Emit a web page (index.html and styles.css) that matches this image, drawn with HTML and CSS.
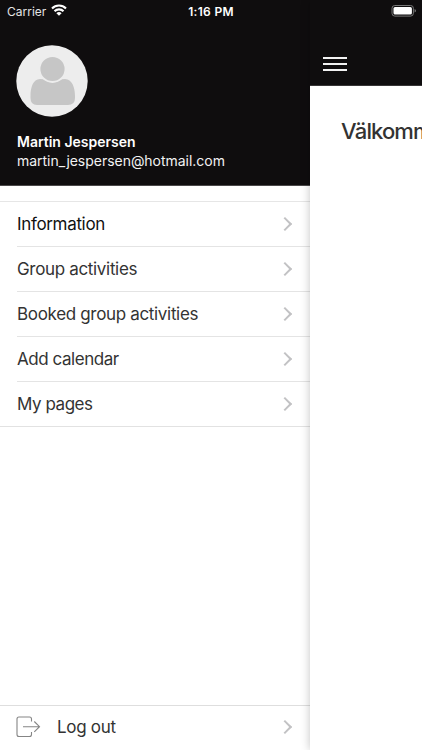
FILE: index.html
```html
<!DOCTYPE html>
<html lang="en">
<head>
  <meta charset="utf-8">
  <title>Menu</title>
  <meta name="viewport" content="width=device-width, initial-scale=1">
  <link rel="stylesheet" href="styles.css">
</head>
<body>
  <div class="statusbar">
    <div class="carrier">
      <span>Carrier</span>
      <svg width="16" height="12" viewBox="0 0 16 12" fill="none" stroke="#fff" stroke-width="2.1">
        <path d="M1 4.4a10 10 0 0 1 14 0"/>
        <path d="M3.5 7.2a6.4 6.4 0 0 1 9 0"/>
        <path d="M8 11.8L5.4 9.2a3.7 3.7 0 0 1 5.2 0z" fill="#fff" stroke="none"/>
      </svg>
    </div>
    <span class="clock">1:16 PM</span>
    <svg class="battery" width="26" height="12" viewBox="0 0 26 12">
      <rect x="1" y=".5" width="21.4" height="10.6" rx="2.8" fill="none" stroke="#777"/>
      <rect x="2.5" y="2" width="18.4" height="7.6" rx="1.5" fill="#fff"/>
      <path d="M23.6 4v3.6q1.3-.6 1.3-1.8t-1.3-1.8z" fill="#888"/>
    </svg>
  </div>

  <aside class="drawer">
    <header class="profile">
      <svg class="avatar" width="72" height="72" viewBox="0 0 72 72">
        <circle cx="36" cy="36" r="35.7" fill="#ededed"/>
        <path d="M24 34q3 0 5.5 1.4 7 3.8 14 0 2.5-1.4 5.5-1.4c7 0 10 8.5 10 17v2q0 7-7 7H21q-6.5 0-6.500-7v-2c0-8.500 2.500-17 9.500-17z" fill="#c6c6c6"/>
        <circle cx="36.5" cy="24" r="13" fill="#c6c6c6" stroke="#ededed" stroke-width="1.8"/>
      </svg>
      <div class="name">Martin Jespersen</div>
      <div class="email">martin_jespersen@hotmail.com</div>
    </header>

    <ul class="menu">
      <li class="active"><span>Information</span><i class="chevron"></i></li>
      <li><span>Group activities</span><i class="chevron"></i></li>
      <li><span>Booked group activities</span><i class="chevron"></i></li>
      <li><span>Add calendar</span><i class="chevron"></i></li>
      <li><span>My pages</span><i class="chevron"></i></li>
    </ul>

    <div class="logout">
      <svg width="25" height="22" viewBox="0 0 25 22" fill="none" stroke="#858585" stroke-width="1.1">
        <path d="M15.5 5.5V3q0-2-2-2H3Q1 1 1 3v15.5q0 2 2 2h10.5q2 0 2-2V16"/>
        <path d="M7 10.7h16.5M18.3 5.5l5.2 5.200-5.200 5.200"/>
      </svg>
      <span class="logout-text">Log out</span><i class="chevron"></i>
    </div>
  </aside>

  <main class="page">
    <div class="topbar">
      <div class="burger"><b></b><b></b><b></b></div>
    </div>
    <h1>Välkommen</h1>
  </main>
</body>
</html>
```

FILE: styles.css
```css
* { box-sizing: border-box; }
body {
  margin: 0;
  height: 750px;
  display: flex;
  overflow: hidden;
  background: #fff;
  color: #333;
  font-family: Inter, "Liberation Sans", sans-serif;
}

/* status bar lies over the drawer and the page */
.statusbar {
  position: absolute;
  top: 0;
  left: 0;
  z-index: 2;
  width: 422px;
  height: 22px;
  padding: 0 7px;
  display: grid;
  grid-template-columns: 1fr auto 1fr;
  align-items: center;
  color: #fff;
  font-size: 12px;
}
.carrier { display: flex; align-items: center; gap: 5px; color: #e4e4e4; }
.carrier svg { margin-top: -2px; }
.clock { font-weight: 600; letter-spacing: 0.3px; }
.battery { justify-self: end; margin: -1px -2px 0 0; }

.drawer {
  width: 310px;
  flex: none;
  display: flex;
  flex-direction: column;
}
.profile {
  height: 186px;
  padding: 45px 0 0 16px;
  background: #0f0d0e;
  border-bottom: 1px solid #4a4849;
  color: #fff;
}
.avatar { display: block; }
.name { margin: 16px 0 0 1px; font-size: 14px; line-height: 18px; font-weight: 600; }
.email { margin-left: 1px; font-size: 14px; line-height: 19px; letter-spacing: -0.03px; color: #f2f2f2; }

.menu {
  list-style: none;
  margin: 15px 0 0;
  padding: 0 0 0 17px;
  border-top: 1px solid #e6e6e6;
  border-bottom: 1px solid #e2e2e2;
}
.menu li {
  height: 45px;
  padding-right: 18px;
  display: flex;
  align-items: center;
  justify-content: space-between;
  border-bottom: 1px solid #e4e4e4;
  font-size: 17px;
  letter-spacing: -0.33px;
}
.menu li:last-child { border-bottom: none; height: 44px; }
.menu li:nth-child(n+4) { letter-spacing: -0.45px; }
.menu .active { color: #111; }

.chevron {
  width: 10px;
  height: 10px;
  margin-right: 2px;
  border: solid #c2c2c4;
  border-width: 2px 2px 0 0;
  transform: rotate(45deg);
}

.logout {
  margin-top: auto;
  height: 45px;
  padding: 0 18px 2px 16px;
  display: flex;
  align-items: center;
  border-top: 1px solid #dedede;
  font-size: 17px;
  letter-spacing: -0.3px;
}
.logout-text { margin-left: 16px; }
.logout .chevron { margin-left: auto; }

.page {
  flex: 1;
  min-width: 0;
  overflow: hidden;
  background: #fff;
  box-shadow: 0 0 9px rgba(0,0,0,.24);
}
.topbar {
  height: 86px;
  padding: 57px 0 0 13px;
  background: #0f0d0e;
  border-bottom: 1px solid #373536;
}
.burger { width: 24px; display: flex; flex-direction: column; gap: 4px; }
.burger b { height: 2px; background: #f2f2f2; }
.page h1 {
  margin: 31px 0 0 31px;
  font-size: 22px;
  line-height: 28px;
  font-weight: 500;
  letter-spacing: -0.9px;
}
```
